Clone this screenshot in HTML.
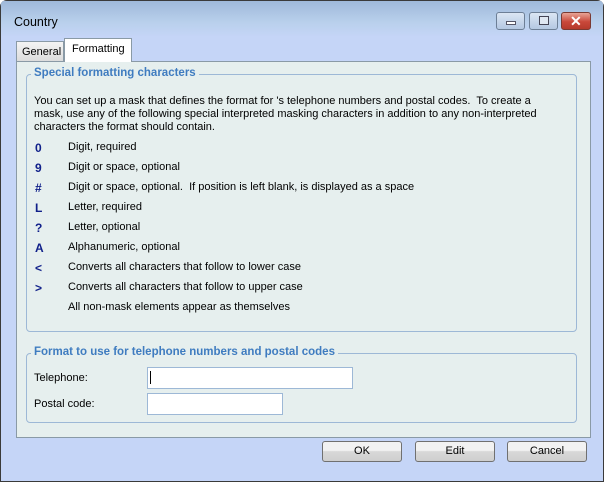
<!DOCTYPE html>
<html><head><style>
*{margin:0;padding:0;box-sizing:border-box}
body{width:604px;height:482px;background:#fff;font-family:"Liberation Sans",sans-serif;font-size:11px;color:#000;position:relative;overflow:hidden}
.win{position:absolute;left:0;top:0;width:604px;height:482px;box-shadow:inset 0 0 0 1px #3a3a3a;border-radius:7px 7px 0 0;background:#c5d5f7;overflow:hidden}
.title{position:absolute;left:1px;top:1px;width:602px;height:36px;background:linear-gradient(#9fb9da,#b9d0ec 60%,#c5d5f7)}
.title span{position:absolute;left:13px;top:14px;font-size:12.5px;color:#000}
.tb{position:absolute;top:12px;height:18px;border:1px solid #6d7f96;border-radius:3px;background:linear-gradient(#dbe6f4,#b4c8e2)}
.abs{position:absolute}
.panel{position:absolute;left:16px;top:61px;width:575px;height:377px;background:#e6efee;border:1px solid #8a9aa6}
.tab{position:absolute;border:1px solid #8a9aa6;border-bottom:none}
.grp{position:absolute;border:1px solid #9db8d6;border-radius:4px}
.leg{position:absolute;top:-8px;left:4px;background:#e6efee;padding:0 3px;color:#3f7cc0;font-weight:bold;font-size:11.5px}
.row{position:absolute;left:35px}
.row b{position:absolute;left:0;color:#10208a;font-size:12px}
.row span{position:absolute;left:33px;white-space:nowrap}
.inp{position:absolute;background:#fff;border:1px solid #9db8d6}
.btn{position:absolute;top:441px;width:80px;height:21px;border:1px solid #707070;border-radius:3px;background:linear-gradient(#f2f2f2 45%,#d8d8d8 50%,#cfcfcf);text-align:center;line-height:19px}
</style></head><body>
<div class="win">
<div class="title"><span>Country</span></div>
<div class="tb" style="left:496px;width:29px"><div class="abs" style="left:9px;top:8px;width:10px;height:4px;background:#fff;border:1px solid #556"></div></div>
<div class="tb" style="left:529px;width:29px"><div class="abs" style="left:9px;top:3px;width:10px;height:9px;border:1px solid #445;background:#dfe7f2"></div></div>
<div class="tb" style="left:561px;width:30px;border-color:#7a3a32;background:linear-gradient(#e8a496,#c9483a 55%,#b53a2c)"><div class="abs" style="left:8px;top:0;color:#fff;font-weight:bold;font-size:14px;line-height:16px">✕</div></div>
<div class="panel"></div>
<div class="tab" style="left:16px;top:41px;width:48px;height:20px;background:linear-gradient(#f4f4f4,#dcdcdc)"><span class="abs" style="left:5px;top:4px">General</span></div>
<div class="tab" style="left:64px;top:38px;width:68px;height:24px;background:#fff"><span class="abs" style="left:7px;top:4px">Formatting</span></div>
<div class="grp" style="left:26px;top:74px;width:551px;height:258px"><div class="leg">Special formatting characters</div></div>
<div class="abs" style="left:34px;top:95px;white-space:nowrap;line-height:13px">You can set up a mask that defines the format for 's telephone numbers and postal codes.&nbsp; To create a<br>mask, use any of the following special interpreted masking characters in addition to any non-interpreted<br>characters the format should contain.</div>
<div class="row" style="top:141px"><b>0</b><span>Digit, required</span></div>
<div class="row" style="top:161px"><b>9</b><span>Digit or space, optional</span></div>
<div class="row" style="top:181px"><b>#</b><span>Digit or space, optional.&nbsp; If position is left blank, is displayed as a space</span></div>
<div class="row" style="top:201px"><b>L</b><span>Letter, required</span></div>
<div class="row" style="top:221px"><b>?</b><span>Letter, optional</span></div>
<div class="row" style="top:241px"><b>A</b><span>Alphanumeric, optional</span></div>
<div class="row" style="top:261px"><b>&lt;</b><span>Converts all characters that follow to lower case</span></div>
<div class="row" style="top:281px"><b>&gt;</b><span>Converts all characters that follow to upper case</span></div>
<div class="row" style="top:301px"><span>All non-mask elements appear as themselves</span></div>
<div class="grp" style="left:26px;top:353px;width:551px;height:70px"><div class="leg">Format to use for telephone numbers and postal codes</div></div>
<div class="abs" style="left:34px;top:372px">Telephone:</div>
<div class="abs" style="left:34px;top:398px">Postal code:</div>
<div class="inp" style="left:147px;top:367px;width:206px;height:22px"><div class="abs" style="left:2px;top:3px;width:1px;height:13px;background:#000"></div></div>
<div class="inp" style="left:147px;top:393px;width:136px;height:22px"></div>
<div class="btn" style="left:322px">OK</div>
<div class="btn" style="left:415px">Edit</div>
<div class="btn" style="left:507px">Cancel</div>
</div>
</body></html>
